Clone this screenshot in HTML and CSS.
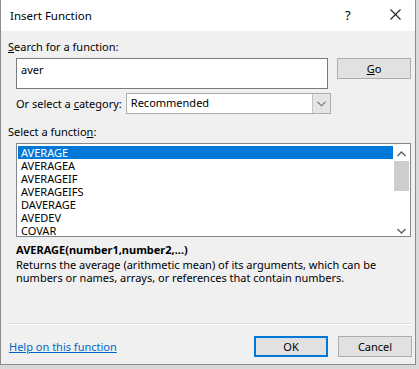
FILE: index.html
```html
<!DOCTYPE html>
<html lang="en">
<head>
    <meta charset="UTF-8">
    <title>Insert Function</title>
    <link rel="stylesheet" href="styles.css">
</head>
<body>
    <div class="dialog">
        <div class="title-bar">
            <span class="title">Insert Function</span>
            <span class="help-btn">?</span>
            <span class="close-btn">
                <svg width="11" height="11" viewBox="0 0 11 11">
                    <path d="M0.5 0.5 L10.5 10.5 M10.5 0.5 L0.5 10.5" stroke="#222" stroke-width="1.1" fill="none"/>
                </svg>
            </span>
        </div>

        <div class="content">
            <div class="label"><u>S</u>earch for a function:</div>

            <div class="search-row">
                <div class="search-box">aver</div>
                <button class="btn"><u>G</u>o</button>
            </div>

            <div class="category-row">
                <span>Or select a <u>c</u>ategory:</span>
                <div class="select">
                    <span class="select-value">Recommended</span>
                    <span class="select-arrow">
                        <svg width="9" height="6" viewBox="0 0 9 6">
                            <path d="M0.5 0.8 L4.5 4.8 L8.5 0.8" stroke="#6d6d6d" stroke-width="1.1" fill="none"/>
                        </svg>
                    </span>
                </div>
            </div>

            <div class="label list-label">Select a functio<u>n</u>:</div>

            <div class="listbox">
                <ul class="items">
                    <li class="selected">AVERAGE</li>
                    <li>AVERAGEA</li>
                    <li>AVERAGEIF</li>
                    <li>AVERAGEIFS</li>
                    <li>DAVERAGE</li>
                    <li>AVEDEV</li>
                    <li>COVAR</li>
                </ul>
                <div class="scrollbar">
                    <svg class="arrow" width="9" height="6" viewBox="0 0 9 6">
                        <path d="M0.5 5 L4.5 1 L8.5 5" stroke="#606060" stroke-width="1.4" fill="none"/>
                    </svg>
                    <div class="track">
                        <div class="thumb"></div>
                    </div>
                    <svg class="arrow" width="9" height="6" viewBox="0 0 9 6">
                        <path d="M0.5 1 L4.5 5 L8.5 1" stroke="#606060" stroke-width="1.4" fill="none"/>
                    </svg>
                </div>
            </div>

            <div class="signature">AVERAGE(number1,number2,...)</div>
            <p class="description">Returns the average (arithmetic mean) of its arguments, which can be numbers or names, arrays, or references that contain numbers.</p>

            <div class="separator"></div>

            <div class="footer">
                <a class="help-link" href="#">Help on this function</a>
                <div class="footer-buttons">
                    <button class="btn btn-default">OK</button>
                    <button class="btn">Cancel</button>
                </div>
            </div>
        </div>
    </div>
</body>
</html>
```

FILE: styles.css
```css
body {
    margin: 0;
    background-color: #d9d9d9;
    font-family: "Noto Sans", "Open Sans", sans-serif;
    font-size: 11px;
    color: #000;
}

.dialog {
    width: 414px;
    height: 364px;
    background-color: #f0f0f0;
    border: 1px solid #8c8c8c;
    border-top: none;
    display: flex;
    flex-direction: column;
}

.title-bar {
    height: 31px;
    background-color: #fff;
    display: flex;
    align-items: center;
    flex-shrink: 0;
}

.title {
    padding-left: 9px;
    flex: 1;
    font-size: 11.5px;
    margin-top: -1px;
}

.help-btn {
    width: 12px;
    font-size: 13px;
    margin-right: 33px;
    margin-top: -2px;
}

.close-btn {
    display: flex;
    margin-right: 14px;
    margin-top: -2px;
}

.content {
    padding: 8px 3px 0 7px;
    line-height: 15px;
}

u {
    text-decoration: underline;
    text-underline-offset: 1px;
}

.search-row {
    display: flex;
    align-items: flex-start;
    margin-top: 4px;
    padding-left: 8px;
}

.search-box {
    background-color: #fff;
    border: 1px solid #7a7a7a;
    padding: 3px 0 0 4px;
    box-sizing: border-box;
    width: 312px;
    height: 31px;
}

.btn {
    font-family: inherit;
    font-size: 11px;
    width: 74px;
    height: 21px;
    padding: 0;
    background-color: #e1e1e1;
    border: 1px solid #adadad;
    color: #000;
    line-height: 17px;
}

.search-row .btn {
    margin-left: 9px;
}

.category-row {
    display: flex;
    align-items: center;
    margin-top: 4px;
    padding-left: 8px;
}

.select {
    margin-left: 4px;
    width: 205px;
    height: 21px;
    box-sizing: border-box;
    border: 1px solid #adadad;
    background-color: #fff;
    display: flex;
}

.select-value {
    flex: 1;
    padding-left: 4px;
    line-height: 18px;
}

.select-arrow {
    width: 17px;
    background-color: #e5e5e5;
    border-left: 1px solid #c4c4c4;
    display: flex;
    align-items: center;
    justify-content: center;
}

.list-label {
    margin-top: 10px;
}

.listbox {
    margin: 4px 0 0 8px;
    width: 395px;
    height: 94px;
    box-sizing: border-box;
    border: 1px solid #828790;
    background-color: #fff;
    display: flex;
    overflow: hidden;
}

.items {
    list-style: none;
    margin: 0;
    padding: 2px 0 0 1px;
    flex: 1;
}

.items li {
    height: 13px;
    line-height: 13px;
    padding-left: 3px;
}

.items li.selected {
    background-color: #0078d7;
    color: #fff;
}

.scrollbar {
    width: 17px;
    display: flex;
    flex-direction: column;
    align-items: center;
    padding-top: 7px;
}

.track {
    height: 67px;
    width: 15px;
    padding-top: 4px;
}

.thumb {
    height: 30px;
    width: 15px;
    background-color: #cdcdcd;
}

.scrollbar .arrow {
    flex-shrink: 0;
}

.signature {
    font-weight: bold;
    margin: 5px 0 0 8px;
}

.description {
    margin: 1px 0 0 8px;
    line-height: 13px;
    width: 385px;
}

.separator {
    margin-top: 39px;
    height: 1px;
    background-color: #dcdcdc;
    border-bottom: 1px solid #fff;
}

.footer {
    display: flex;
    align-items: center;
    justify-content: space-between;
    margin-top: 11px;
}

.help-link {
    color: #0066cc;
    padding-left: 1px;
}

.footer-buttons {
    display: flex;
    gap: 10px;
}

.btn-default {
    border: 2px solid #0078d7;
}
```
